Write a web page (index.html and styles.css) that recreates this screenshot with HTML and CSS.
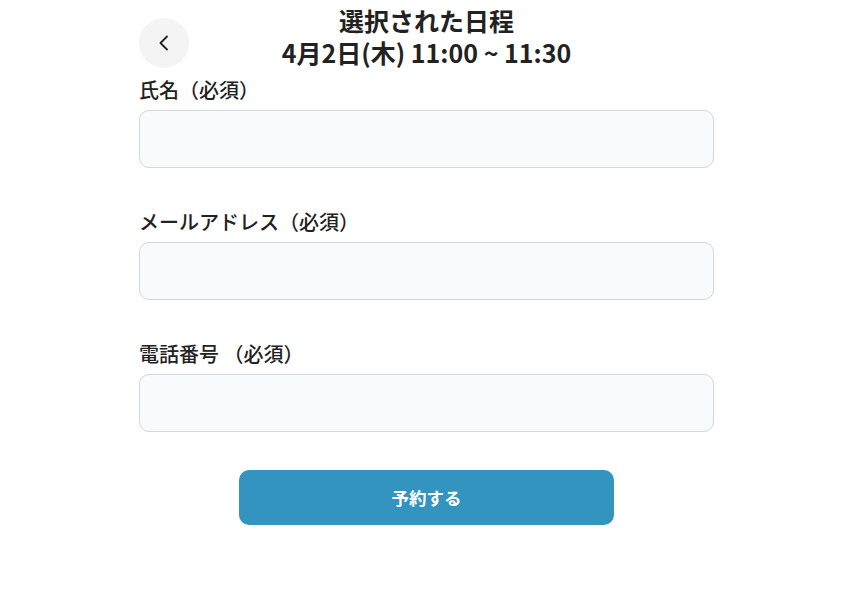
FILE: index.html
```html
<!DOCTYPE html>
<html lang="ja">
<head>
<meta charset="utf-8">
<link rel="stylesheet" href="styles.css">
</head>
<body>
<div class="page">
  <header class="header">
    <button class="back" aria-label="戻る">
      <svg width="16" height="16" viewBox="0 0 16 16"><path d="M11 1.5 4.5 8 11 14.5" fill="none" stroke="#222" stroke-width="1.8" stroke-linecap="round" stroke-linejoin="round"/></svg>
    </button>
    <h1 class="title"><span class="title-line">選択された日程</span><span class="title-line">4月2日(木) 11:00 ~ 11:30</span></h1>
    <span></span>
  </header>
  <form class="form">
    <div class="field">
      <label class="label">氏名（必須）</label>
      <input class="input" type="text">
    </div>
    <div class="field">
      <label class="label">メールアドレス（必須）</label>
      <input class="input" type="email">
    </div>
    <div class="field">
      <label class="label">電話番号 （必須）</label>
      <input class="input" type="tel">
    </div>
    <div class="actions">
      <button class="submit" type="button">予約する</button>
    </div>
  </form>
</div>
</body>
</html>
```
FILE: styles.css
```css
* { box-sizing: border-box; }
html, body { margin: 0; background: #fff; }
body {
  font-family: "Noto Sans CJK JP", "Noto Sans", sans-serif;
  color: #222;
}
.page {
  width: 575px;
  margin-left: 139px;
  padding-top: 4px;
}
.header {
  display: grid;
  grid-template-columns: 50px 1fr 50px;
  align-items: start;
}
.back {
  width: 50px;
  height: 50px;
  margin-top: 14px;
  border-radius: 50%;
  border: none;
  background: #f4f4f5;
  display: flex;
  align-items: center;
  justify-content: center;
  padding: 0;
}
.title {
  margin: 0;
  display: flex;
  flex-direction: column;
  align-items: center;
  font-size: 25px;
  line-height: 32px;
  font-weight: 700;
  color: #222;
}
.title-line {
  display: block;
  white-space: nowrap;
}
.form {
  display: flex;
  flex-direction: column;
  gap: 40px;
  margin-top: 8px;
}
.field {
  display: flex;
  flex-direction: column;
  gap: 6px;
}
.label {
  font-size: 20px;
  line-height: 28px;
  font-weight: 500;
  color: #222;
}
.input {
  height: 58px;
  border: 1px solid #d4d6da;
  border-radius: 10px;
  background: #f9fafb;
  font: inherit;
  padding: 0 16px;
}
.actions {
  display: flex;
  justify-content: center;
  margin-top: -2px;
}
.submit {
  width: 375px;
  height: 55px;
  border: none;
  border-radius: 10px;
  background: #3394bf;
  color: #fff;
  font-family: inherit;
  font-size: 17.5px;
  font-weight: 700;
}
```
